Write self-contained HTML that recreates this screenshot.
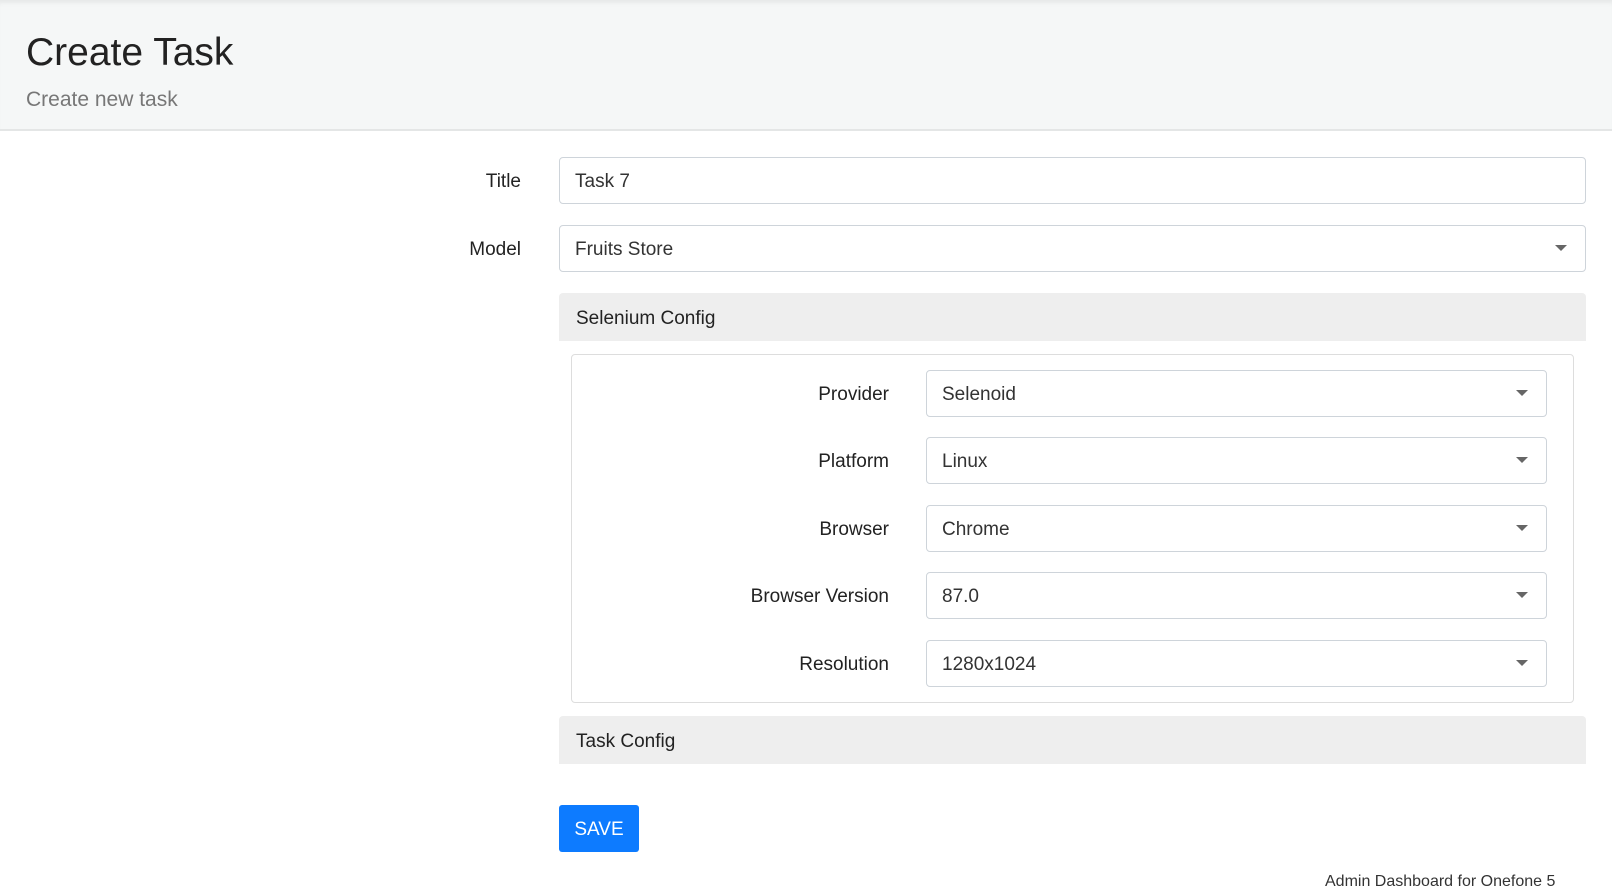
<!DOCTYPE html>
<html><head><meta charset="utf-8"><style>
*{box-sizing:border-box;margin:0;padding:0}
body{width:1612px;height:878px;overflow:hidden;background:#fff;font-family:"Liberation Sans",sans-serif;color:#212529;position:relative}
.hdr{position:absolute;left:0;top:0;width:1612px;height:131px;background:#f5f7f7;border-bottom:2px solid #e4e6e6;box-shadow:inset 0 6px 6px -4px rgba(0,0,0,.08)}
.hdr h1{position:absolute;left:26px;top:31px;font-size:39px;font-weight:300;color:#222}
.hdr p{position:absolute;left:26px;top:88px;font-size:21px;font-weight:300;color:#777}
.lbl{position:absolute;font-size:19px;text-align:right;color:#222}
.inp{position:absolute;height:47px;border:1px solid #ced4da;border-radius:4px;font-size:19px;padding:13px 15px 9px;color:#333;background:#fff}
.inp.sel::after{content:"";position:absolute;right:18px;top:19px;border-left:6px solid transparent;border-right:6px solid transparent;border-top:6px solid #666}
.bar{position:absolute;left:559px;width:1027px;height:48px;background:#eeeeee;border-radius:4px 4px 0 0;font-size:19px;padding:15px 17px 0;color:#222}
.box{position:absolute;left:571px;top:354px;width:1003px;height:349px;border:1px solid #ddd;border-radius:4px}
.btn{position:absolute;left:559px;top:805px;width:80px;height:47px;background:#0d7bff;color:#fff;border-radius:3px;font-size:19px;text-align:center;line-height:49px}
.ft{position:absolute;left:1325px;top:873px;font-size:16px;color:#333;white-space:nowrap}
</style></head><body>
<div class="hdr"><h1>Create Task</h1><p>Create new task</p></div>
<div class="lbl" style="right:1091px;top:171px">Title</div>
<div class="inp" style="left:559px;top:157px;width:1027px">Task 7</div>
<div class="lbl" style="right:1091px;top:239px">Model</div>
<div class="inp sel" style="left:559px;top:225px;width:1027px">Fruits Store</div>
<div class="bar" style="top:293px">Selenium Config</div>
<div class="box"></div>
<div class="lbl" style="right:723px;top:384px">Provider</div>
<div class="inp sel" style="left:926px;top:370px;width:621px">Selenoid</div>
<div class="lbl" style="right:723px;top:451px">Platform</div>
<div class="inp sel" style="left:926px;top:437px;width:621px">Linux</div>
<div class="lbl" style="right:723px;top:519px">Browser</div>
<div class="inp sel" style="left:926px;top:505px;width:621px">Chrome</div>
<div class="lbl" style="right:723px;top:586px">Browser Version</div>
<div class="inp sel" style="left:926px;top:572px;width:621px">87.0</div>
<div class="lbl" style="right:723px;top:654px">Resolution</div>
<div class="inp sel" style="left:926px;top:640px;width:621px">1280x1024</div>
<div class="bar" style="top:716px">Task Config</div>
<div class="btn">SAVE</div>
<div class="ft">Admin Dashboard for Onefone 5</div>
</body></html>
